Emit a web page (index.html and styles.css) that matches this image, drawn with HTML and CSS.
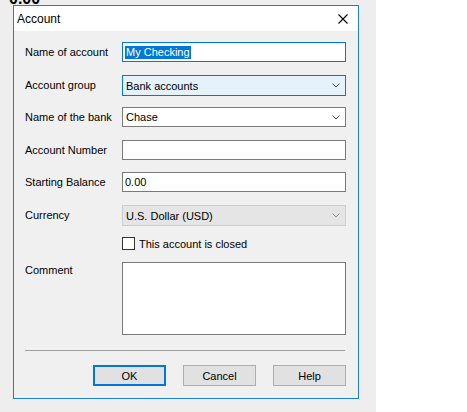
FILE: index.html
```html
<!DOCTYPE html>
<html>
<head>
<meta charset="utf-8">
<link rel="stylesheet" href="styles.css">
</head>
<body>
<div class="screen">
  <div class="desk">
    <div class="bigtext">0.00</div>
    <div class="dialog">
      <div class="titlebar">
        <span class="title">Account</span>
        <svg class="close" width="10" height="10" viewBox="0 0 10 10"><path d="M0.5 0.5 L9.5 9.5 M9.5 0.5 L0.5 9.5" stroke="#000" stroke-width="1.1" fill="none"/></svg>
      </div>
      <div class="body">
        <div class="form">
          <div class="row r33">
            <label class="lbl h20">Name of account</label>
            <div class="field input focus"><span class="sel">My Checking</span></div>
          </div>
          <div class="row r32">
            <label class="lbl h21">Account group</label>
            <div class="field select hot h21"><span>Bank accounts</span>
              <svg class="chev" width="8" height="5" viewBox="0 0 8 5"><path d="M0.5 0.5 L4 4 L7.5 0.5" stroke="#444" stroke-width="1" fill="none"/></svg>
            </div>
          </div>
          <div class="row r33">
            <label class="lbl h20">Name of the bank</label>
            <div class="field select"><span>Chase</span>
              <svg class="chev" width="8" height="5" viewBox="0 0 8 5"><path d="M0.5 0.5 L4 4 L7.5 0.5" stroke="#444" stroke-width="1" fill="none"/></svg>
            </div>
          </div>
          <div class="row r32">
            <label class="lbl h20">Account Number</label>
            <div class="field input"></div>
          </div>
          <div class="row r33">
            <label class="lbl h20">Starting Balance</label>
            <div class="field input"><span>0.00</span></div>
          </div>
          <div class="row r32">
            <label class="lbl h21">Currency</label>
            <div class="field select disabled h21"><span>U.S. Dollar (USD)</span>
              <svg class="chev" width="8" height="5" viewBox="0 0 8 5"><path d="M0.5 0.5 L4 4 L7.5 0.5" stroke="#8a8a8a" stroke-width="1" fill="none"/></svg>
            </div>
          </div>
          <div class="row r25">
            <span class="lbl h13"></span>
            <div class="check"><span class="box"></span><span>This account is closed</span></div>
          </div>
          <div class="row r73">
            <label class="lbl top">Comment</label>
            <div class="field area"></div>
          </div>
        </div>
        <div class="sep"></div>
        <div class="buttons">
          <button class="btn default">OK</button>
          <button class="btn">Cancel</button>
          <button class="btn">Help</button>
        </div>
      </div>
    </div>
  </div>
</div>
</body>
</html>
```
FILE: styles.css
```css
* { box-sizing: border-box; }
html, body { margin: 0; padding: 0; }
body {
  width: 467px;
  height: 412px;
  background: #ffffff;
  font-family: "Liberation Sans", Arial, sans-serif;
  font-size: 11px;
  color: #000;
  overflow: hidden;
}
.screen { display: flex; }
.desk {
  position: relative;
  width: 376px;
  height: 412px;
  background: #eeeeee;
  overflow: hidden;
}
.bigtext {
  position: absolute;
  left: 9px;
  top: -9px;
  font-size: 16px;
  line-height: 16px;
  font-weight: bold;
}
.dialog {
  position: absolute;
  left: 13px;
  top: 5px;
  width: 346px;
  height: 394px;
  border: 1px solid #1a7fd6;
  background: #f0f0f0;
  display: flex;
  flex-direction: column;
}
.titlebar {
  height: 25px;
  background: #ffffff;
  display: flex;
  align-items: center;
  justify-content: space-between;
  padding: 0 10px 0 3px;
}
.title { font-size: 12px; color: #000; }
.close { display: block; }
.body {
  padding: 11px 12px 0 11px;
  display: flex;
  flex-direction: column;
}
.form { display: flex; flex-direction: column; }
.row { display: flex; align-items: flex-start; }
.r33 { height: 33px; }
.r32 { height: 32px; }
.r25 { height: 25px; }
.r73 { height: 73px; }
.lbl {
  width: 97px;
  flex: none;
  height: 20px;
  line-height: 20px;
  white-space: nowrap;
}
.lbl.h21 { height: 21px; line-height: 21px; }
.lbl.h13 { height: 13px; }
.lbl.top { line-height: 16px; height: 16px; }
.field {
  width: 225px;
  height: 20px;
  border: 1px solid #7a7a7a;
  background: #ffffff;
  display: flex;
  align-items: center;
  padding-left: 2px;
  white-space: nowrap;
}
.field.h21 { height: 21px; }
.field.focus { border-color: #0078d7; }
.sel {
  background: #0078d7;
  color: #ffffff;
  line-height: 13px;
  padding: 0 1px;
}
.select {
  justify-content: space-between;
  padding-left: 3px;
  padding-right: 5px;
}
.select.hot { background: #e5f1fb; border-color: #0078d7; }
.select.disabled { background: #e5e5e5; border-color: #cccccc; color: #000; }
.chev { display: block; }
.check { display: flex; align-items: center; gap: 4px; height: 13px; }
.box {
  width: 13px;
  height: 13px;
  border: 1px solid #333333;
  background: #ffffff;
  display: block;
}
.field.area { height: 73px; }
.sep {
  margin-top: 15px;
  height: 1px;
  width: 320px;
  background: #a0a0a0;
}
.buttons {
  margin-top: 14px;
  display: flex;
  justify-content: flex-end;
  gap: 17px;
}
.btn {
  width: 73px;
  height: 21px;
  background: #e1e1e1;
  border: 1px solid #adadad;
  font-family: "Liberation Sans", Arial, sans-serif;
  font-size: 11px;
  color: #000;
  padding: 0;
  margin: 0;
}
.btn.default { border: 2px solid #0078d7; }
```
